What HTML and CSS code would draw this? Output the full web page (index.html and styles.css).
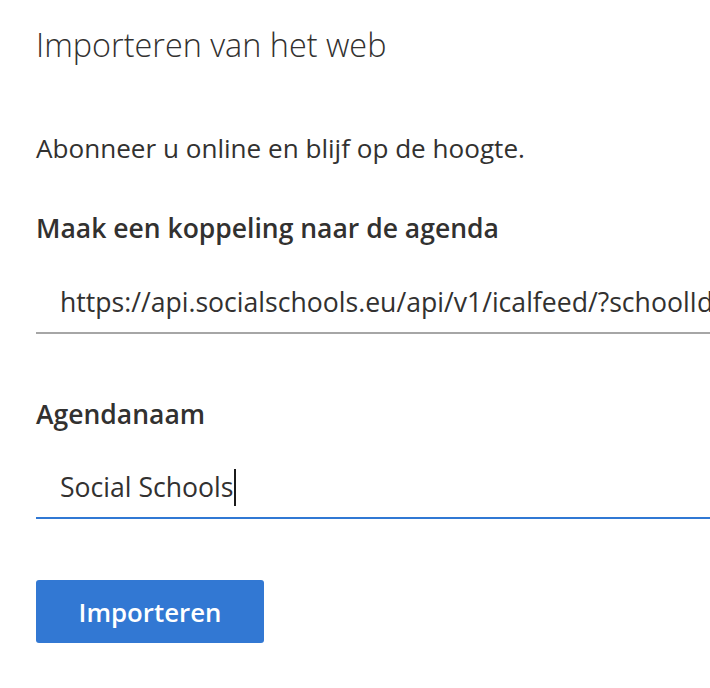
FILE: index.html
```html
<!DOCTYPE html>
<html lang="nl">
<head>
<meta charset="utf-8">
<title>Importeren van het web</title>
<link rel="stylesheet" href="styles.css">
</head>
<body>
<main class="panel">
  <h1 class="title">Importeren van het web</h1>
  <p class="intro">Abonneer u online en blijf op de hoogte.</p>

  <section class="field field-link">
    <label class="label">Maak een koppeling naar de agenda</label>
    <div class="input input-idle"><span class="value value-url">https://api.socialschools.eu/api/v1/icalfeed/?schoolId=1234</span></div>
  </section>

  <section class="field field-name">
    <label class="label">Agendanaam</label>
    <div class="input input-focus"><span class="value">Social Schools</span><span class="caret"></span></div>
  </section>

  <div class="actions">
    <button class="btn-primary" type="button">Importeren</button>
  </div>
</main>
</body>
</html>
```

FILE: styles.css
```css
html, body {
  margin: 0;
  padding: 0;
  background: #ffffff;
}

body {
  font-family: "Open Sans", "Noto Sans", "Liberation Sans", sans-serif;
  color: #323130;
  overflow: hidden;
}

.panel {
  padding: 0 0 0 36px;
  display: flex;
  flex-direction: column;
}

.title {
  margin: 0;
  padding-top: 22px;
  font-size: 32.4px;
  font-weight: 300;
  line-height: 44px;
  color: #323130;
}

.intro {
  margin: 0;
  padding-top: 64px;
  font-size: 26.1px;
  font-weight: 400;
  line-height: 36px;
  color: #323130;
}

.field {
  display: flex;
  flex-direction: column;
}

.field-link {
  padding-top: 44px;
}

.field-name {
  padding-top: 62px;
}

.label {
  font-size: 26.5px;
  font-weight: 600;
  line-height: 36px;
  color: #323130;
}

.input {
  display: flex;
  align-items: center;
  height: 60px;
  padding-left: 24px;
  overflow: hidden;
  white-space: nowrap;
  font-size: 26.6px;
  font-weight: 400;
  color: #323130;
}

.input-idle {
  margin-top: 26px;
  border-bottom: 2px solid #a6a6a6;
}

.input-focus {
  margin-top: 25px;
  border-bottom: 2px solid #3078d4;
}

.value-url {
  letter-spacing: 0;
}

.caret {
  flex: none;
  width: 2px;
  height: 37px;
  margin-left: 1px;
  background: #1b1b1b;
}

.actions {
  padding-top: 61px;
}

.btn-primary {
  display: block;
  width: 228px;
  height: 63px;
  border: none;
  border-radius: 3px;
  background: #3278d3;
  color: #ffffff;
  font-family: inherit;
  font-size: 25.8px;
  font-weight: 600;
  padding: 0;
}
```
